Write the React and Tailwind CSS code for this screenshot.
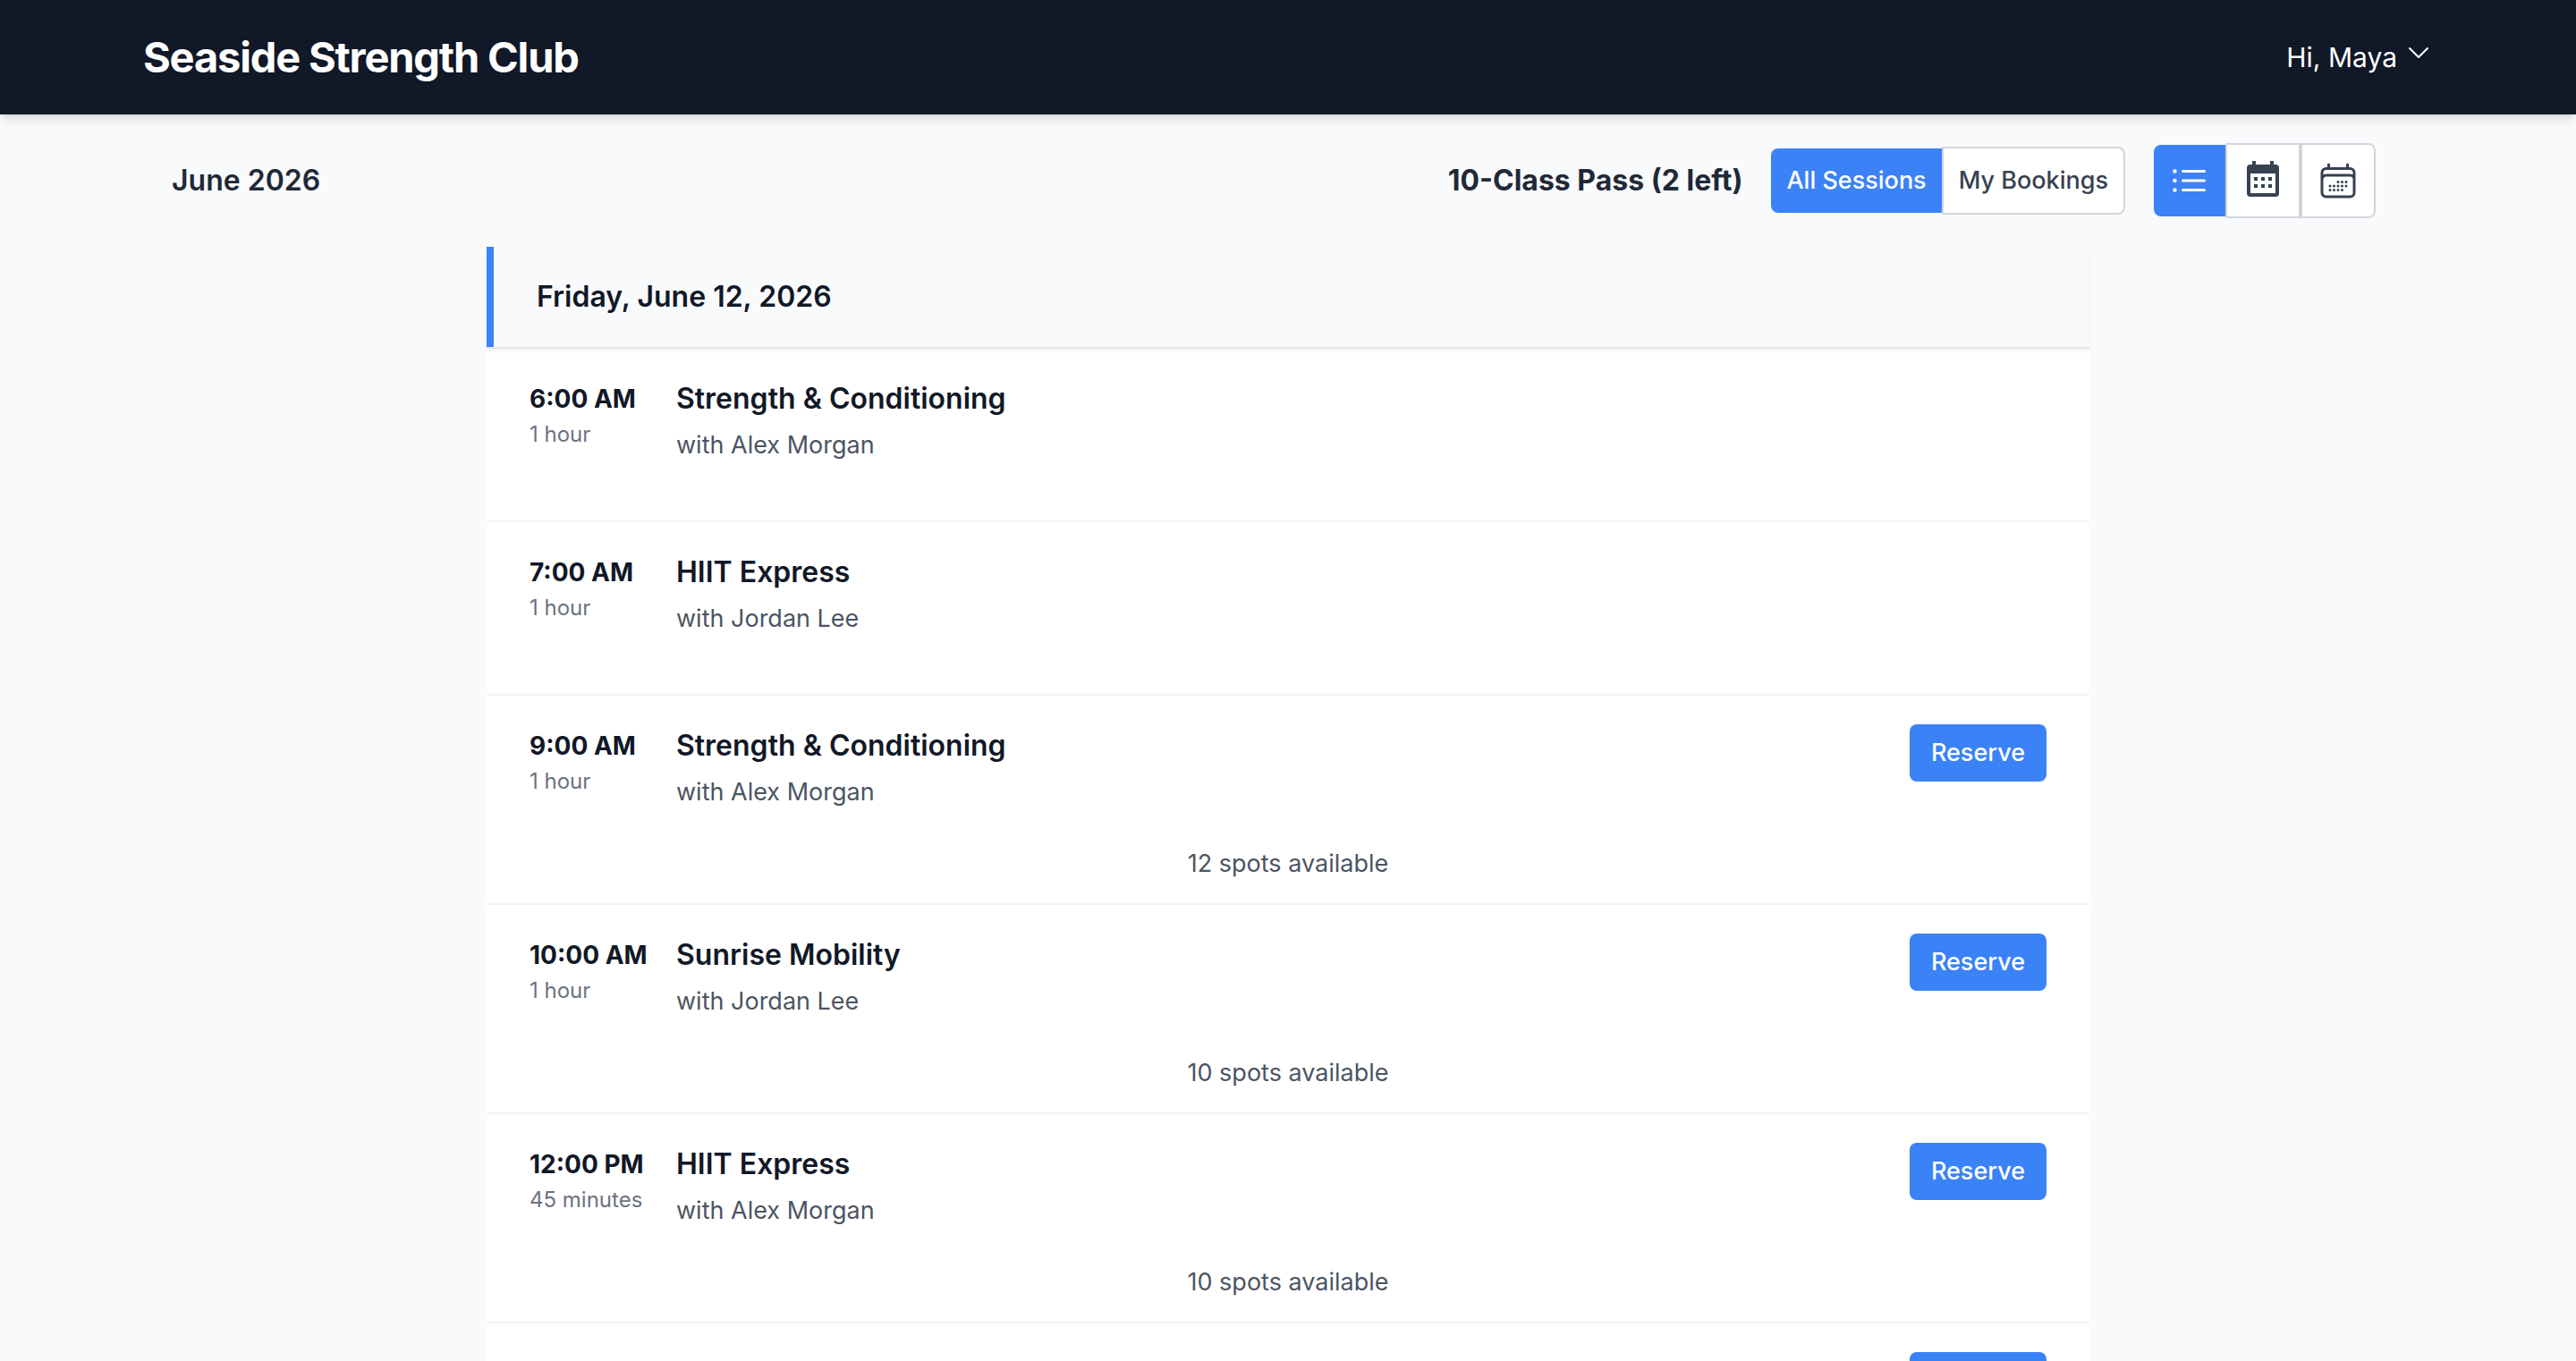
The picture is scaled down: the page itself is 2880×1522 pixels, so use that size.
import { useState } from "react";
import clsx from "clsx";
import { HiOutlineCalendarDays, HiOutlineChevronDown, HiOutlineListBullet } from "react-icons/hi2";

const sessions = [
  { time: "6:00 AM", length: "1 hour", name: "Strength & Conditioning", coach: "Alex Morgan" },
  { time: "7:00 AM", length: "1 hour", name: "HIIT Express", coach: "Jordan Lee" },
  { time: "9:00 AM", length: "1 hour", name: "Strength & Conditioning", coach: "Alex Morgan", spots: 12 },
  { time: "10:00 AM", length: "1 hour", name: "Sunrise Mobility", coach: "Jordan Lee", spots: 10 },
  { time: "12:00 PM", length: "45 minutes", name: "HIIT Express", coach: "Alex Morgan", spots: 10 },
  { time: "4:00 PM", length: "1 hour", name: "Sunrise Mobility", coach: "Jordan Lee", spots: 10 },
];

function CalendarMonthIcon({ className }) {
  return (
    <svg viewBox="0 0 24 24" fill="currentColor" className={className} aria-hidden="true">
      <path d="M9 10v2H7v-2h2zm4 0v2h-2v-2h2zm4 0v2h-2v-2h2zm2-7a2 2 0 0 1 2 2v14a2 2 0 0 1-2 2H5a2 2 0 0 1-2-2V5a2 2 0 0 1 2-2h1V1h2v2h8V1h2v2h1zm0 16V8H5v11h14zM9 14v2H7v-2h2zm4 0v2h-2v-2h2zm4 0v2h-2v-2h2z" />
    </svg>
  );
}

const views = [
  { id: "list", label: "List view", icon: HiOutlineListBullet, corners: "rounded-l-lg" },
  { id: "month", label: "Month view", icon: CalendarMonthIcon, corners: "" },
  { id: "week", label: "Week view", icon: HiOutlineCalendarDays, corners: "rounded-r-lg" },
];

const filters = [
  { id: "all", label: "All Sessions", corners: "rounded-l-lg" },
  { id: "mine", label: "My Bookings", corners: "rounded-r-lg" },
];

function Header() {
  return (
    <header className="relative z-10 bg-[#111827] text-white shadow-[0_8px_12px_-2px_rgba(0,0,0,0.1),0_4px_8px_-4px_rgba(0,0,0,0.1)]">
      <div className="mx-auto flex max-w-[2560px] items-center justify-between py-8">
        <h1 className="text-[47px] leading-16 font-bold tracking-tight">Seaside Strength Club</h1>
        <button type="button" className="flex items-baseline gap-2 text-[30px] leading-12">
          Hi, Maya
          <HiOutlineChevronDown className="size-8" />
        </button>
      </div>
    </header>
  );
}

function Toolbar() {
  const [filter, setFilter] = useState("all");
  const [view, setView] = useState("list");

  return (
    <div className="mx-auto flex w-full max-w-[2560px] items-center justify-between py-8 pr-16 pl-8">
      <h2 className="text-[32px] leading-12 font-semibold text-[#1f2937]">June 2026</h2>

      <div className="flex items-center gap-8">
        <span className="text-[32px] leading-12 font-bold text-[#1f2937]">10-Class Pass (2 left)</span>

        <div className="flex items-center">
          {filters.map((f) => (
            <button
              key={f.id}
              type="button"
              onClick={() => setFilter(f.id)}
              className={clsx(
                "px-[17px] py-4 text-[27px] leading-10 font-medium",
                f.corners,
                filter === f.id ? "bg-[#3b82f6] text-white" : "border-2 border-[#d1d5db] bg-white text-[#374151]"
              )}
            >
              {f.label}
            </button>
          ))}
        </div>

        <div className="flex items-center">
          {views.map(({ id, label, icon: Icon, corners }) => (
            <button
              key={id}
              type="button"
              aria-label={label}
              onClick={() => setView(id)}
              className={clsx(
                "p-4",
                corners,
                view === id ? "bg-[#3b82f6] text-white" : "border-2 border-[#d1d5db] bg-white text-[#374151]"
              )}
            >
              <Icon className="size-12" />
            </button>
          ))}
        </div>
      </div>
    </div>
  );
}

function SessionRow({ session }) {
  return (
    <li className="border-b-2 border-[#f3f4f6] px-12 pt-8 pb-6">
      <div className="mb-10 flex items-start gap-8">
        <div className="w-33 shrink-0 whitespace-nowrap">
          <p className="text-[28px] leading-12 font-bold text-[#111827]">{session.time}</p>
          <p className="text-[24px] leading-8 text-[#6b7280]">{session.length}</p>
        </div>
        <div className="grow">
          <h4 className="mb-2 text-[32px] leading-12 font-semibold text-[#111827]">{session.name}</h4>
          <p className="text-[27px] leading-10 text-[#4b5563]">with {session.coach}</p>
        </div>
        {session.spots && (
          <button type="button" className="rounded-lg bg-[#3b82f6] px-6 py-3 text-[27px] leading-10 font-medium text-white">
            Reserve
          </button>
        )}
      </div>
      {session.spots && (
        <p className="text-center text-[27px] leading-10 text-[#4b5563]">{session.spots} spots available</p>
      )}
    </li>
  );
}

export default function App() {
  return (
    <div className="flex min-h-screen flex-col bg-[#f9fafb] font-['Inter','Liberation_Sans',sans-serif]">
      <Header />
      <Toolbar />

      <main className="mx-auto w-full max-w-[1792px] grow bg-white">
        <div className="border-b-2 border-[#e5e7eb] bg-[#f9fafb] shadow-[0_2px_4px_rgba(0,0,0,0.05)]">
          <h3 className="border-l-8 border-[#3b82f6] px-12 py-8 text-[32px] leading-12 font-semibold text-[#111827]">
            Friday, June 12, 2026
          </h3>
        </div>
        <ul>
          {sessions.map((s) => (
            <SessionRow key={s.time} session={s} />
          ))}
        </ul>
      </main>
    </div>
  );
}
